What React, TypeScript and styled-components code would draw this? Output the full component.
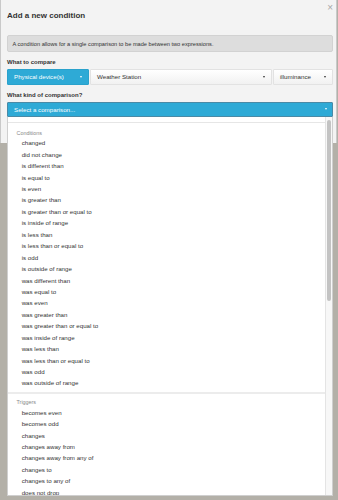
import React from "react";
import styled, { createGlobalStyle } from "styled-components";

const GlobalStyle = createGlobalStyle`
  html, body {
    margin: 0;
    padding: 0;
    background: #b3b0a8;
    font-family: "Liberation Sans", Arial, sans-serif;
    color: #333;
  }
  * { box-sizing: border-box; }
`;

const Page = styled.div`
  width: 338px;
  height: 500px;
  overflow: hidden;
`;

const Modal = styled.div`
  position: relative;
  width: 337px;
  height: 143px;
  background: #f3f3f3;
  border-left: 1px solid #c9c9c9;
  border-right: 1px solid #c9c9c9;
  padding: 10px 3px 0 6px;
`;

const Close = styled.span`
  position: absolute;
  top: 2px;
  right: 3px;
  font-size: 10px;
  line-height: 12px;
  color: #a8a8a8;
`;

const Title = styled.h3`
  margin: 0;
  font-size: 8px;
  line-height: 12px;
  font-weight: bold;
  color: #333;
`;

const Info = styled.div`
  margin-top: 13px;
  height: 17px;
  display: flex;
  align-items: center;
  padding-left: 4.5px;
  background: #dddddd;
  border: 1px solid #d2d2d2;
  border-radius: 2px;
  font-size: 5.65px;
  color: #333;
`;

const Label = styled.div<{ $top: number }>`
  margin-top: ${(p) => p.$top}px;
  font-size: 6px;
  line-height: 8px;
  font-weight: bold;
  color: #333;
`;

const SelectRow = styled.div`
  margin-top: 2.7px;
  display: flex;
  height: 16px;
  gap: 1px;
`;

const Caret = styled.span<{ $light?: boolean }>`
  width: 0;
  height: 0;
  border-left: 1.8px solid transparent;
  border-right: 1.8px solid transparent;
  border-top: 2.2px solid ${(p) => (p.$light ? "#fff" : "#333")};
`;

const Select = styled.div<{ $blue?: boolean; $w?: number }>`
  ${(p) => (p.$w ? `width: ${p.$w}px;` : "flex: 1;")}
  display: flex;
  align-items: center;
  justify-content: space-between;
  padding: 0 6px 0 6px;
  font-size: 6.2px;
  color: ${(p) => (p.$blue ? "#fff" : "#333")};
  background: ${(p) =>
    p.$blue ? "#2eaad6" : "linear-gradient(#ffffff, #f1f1f1)"};
  border: 1px solid ${(p) => (p.$blue ? "#2aa2cc" : "#e2e2e2")};
  border-radius: 1px;
`;

const ComboWrap = styled.div`
  position: relative;
  margin-top: 3px;
`;

const Combo = styled.div`
  height: 15px;
  display: flex;
  align-items: center;
  justify-content: space-between;
  padding: 0 5px 0 6px;
  background: #2eaad6;
  border: 1px solid #4a8aa6;
  border-radius: 1px;
  font-size: 6.2px;
  color: #fff;
`;

const Dropdown = styled.div`
  position: absolute;
  top: 100%;
  left: 0;
  right: 0;
  height: 379px;
  display: flex;
  background: #fff;
  border: 1px solid #cfcfcf;
  border-top: none;
  overflow: hidden;
`;

const Listbox = styled.div`
  flex: 1;
  border-right: 1px solid #e4e4e4;
  overflow: hidden;
`;

const SearchStrip = styled.div`
  height: 6px;
  border-bottom: 1px solid #e6e6e6;
`;

const Group = styled.div<{ $first?: boolean }>`
  padding: ${(p) => (p.$first ? "5.7px 0 3px" : "4.2px 0 0")};
  border-bottom: ${(p) => (p.$first ? "2px solid #ececec" : "none")};
`;

const GroupLabel = styled.div`
  padding-left: 8.5px;
  font-size: 5.4px;
  line-height: 8.6px;
  color: #888;
`;

const Item = styled.div`
  padding-left: 13.7px;
  font-size: 6.15px;
  line-height: 11.45px;
  height: 11.45px;
  color: #333;
  white-space: nowrap;
`;

const Scrollbar = styled.div`
  width: 6px;
  background: #f7f7f7;
  padding: 3px 0.7px 0 0.7px;
`;

const Thumb = styled.div`
  height: 181px;
  background: #c3c3c3;
  border-radius: 2px;
`;

const conditions = [
  "changed",
  "did not change",
  "is different than",
  "is equal to",
  "is even",
  "is greater than",
  "is greater than or equal to",
  "is inside of range",
  "is less than",
  "is less than or equal to",
  "is odd",
  "is outside of range",
  "was different than",
  "was equal to",
  "was even",
  "was greater than",
  "was greater than or equal to",
  "was inside of range",
  "was less than",
  "was less than or equal to",
  "was odd",
  "was outside of range",
];

const triggers = [
  "becomes even",
  "becomes odd",
  "changes",
  "changes away from",
  "changes away from any of",
  "changes to",
  "changes to any of",
  "does not drop",
  "does not rise",
  "drops",
];

export default function App() {
  return (
    <Page>
      <GlobalStyle />
      <Modal>
        <Close>×</Close>
        <Title>Add a new condition</Title>
        <Info>
          A condition allows for a single comparison to be made between two
          expressions.
        </Info>
        <Label $top={6.3}>What to compare</Label>
        <SelectRow>
          <Select $blue $w={82}>
            Physical device(s) <Caret $light />
          </Select>
          <Select>
            Weather Station <Caret />
          </Select>
          <Select $w={60}>
            illuminance <Caret />
          </Select>
        </SelectRow>
        <Label $top={6}>What kind of comparison?</Label>
        <ComboWrap>
          <Combo>
            Select a comparison... <Caret $light />
          </Combo>
          <Dropdown>
            <Listbox>
              <SearchStrip />
              <Group $first>
                <GroupLabel>Conditions</GroupLabel>
                {conditions.map((c) => (
                  <Item key={c}>{c}</Item>
                ))}
              </Group>
              <Group>
                <GroupLabel>Triggers</GroupLabel>
                {triggers.map((t) => (
                  <Item key={t}>{t}</Item>
                ))}
              </Group>
            </Listbox>
            <Scrollbar>
              <Thumb />
            </Scrollbar>
          </Dropdown>
        </ComboWrap>
      </Modal>
    </Page>
  );
}
